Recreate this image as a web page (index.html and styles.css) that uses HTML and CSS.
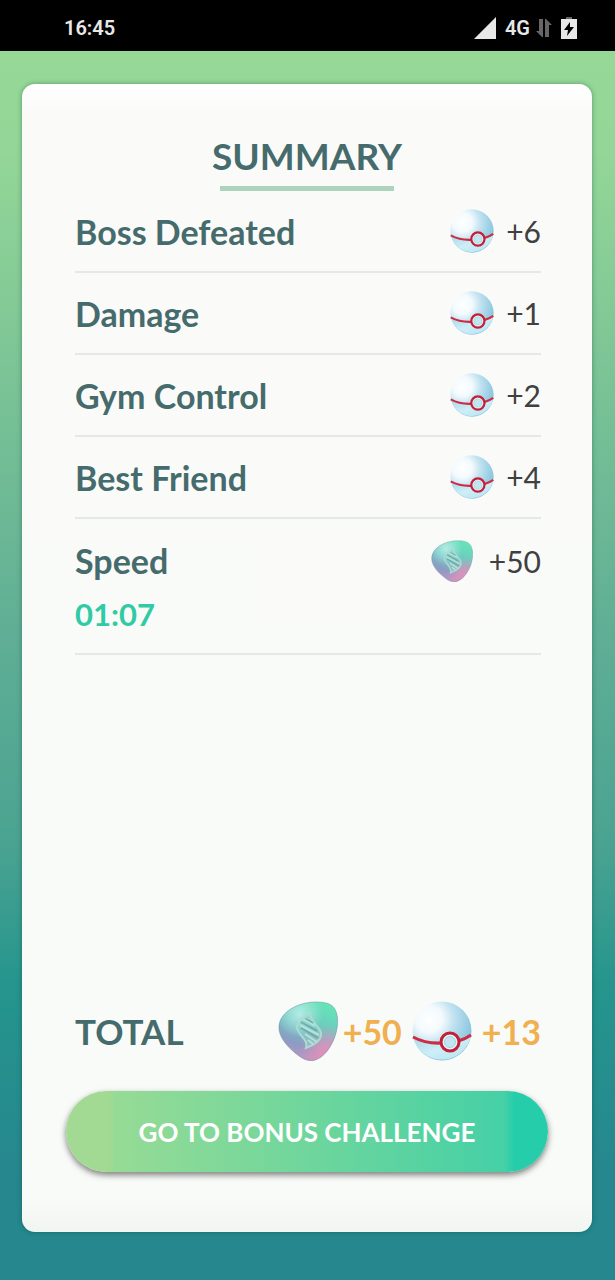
FILE: index.html
```
<!DOCTYPE html>
<html lang="en">

<head>
    <meta charset="utf-8">
    <meta name="viewport" content="width=device-width, initial-scale=1.0">
    <title>Summary</title>
    <link rel="stylesheet" href="styles.css">
</head>

<body>
    <!-- shared icons -->
    <svg class="sprite" aria-hidden="true">
        <defs>
            <radialGradient id="ball-fill" cx="0.28" cy="0.3" r="0.75">
                <stop offset="0" stop-color="#ffffff" />
                <stop offset="0.3" stop-color="#f3fafd" />
                <stop offset="0.55" stop-color="#c3e3f0" />
                <stop offset="1" stop-color="#86c5de" />
            </radialGradient>
            <linearGradient id="ball-low" x1="0" y1="0" x2="1" y2="1">
                <stop offset="0" stop-color="#a6d6e6" />
                <stop offset="0.5" stop-color="#cdeef7" />
                <stop offset="1" stop-color="#b5e2f0" />
            </linearGradient>
            <linearGradient id="candy-fill" x1="0.7" y1="0" x2="0.3" y2="1">
                <stop offset="0" stop-color="#63e5b6" />
                <stop offset="0.45" stop-color="#72c3c2" />
                <stop offset="0.75" stop-color="#8b9cc2" />
                <stop offset="1" stop-color="#bf92c6" />
            </linearGradient>
            <radialGradient id="candy-pink" cx="0.85" cy="0.95" r="0.55">
                <stop offset="0" stop-color="#f08dbb" />
                <stop offset="0.4" stop-color="#e391bb" stop-opacity="0.8" />
                <stop offset="1" stop-color="#e391bb" stop-opacity="0" />
            </radialGradient>
            <radialGradient id="candy-shine" cx="0.35" cy="0.2" r="0.4">
                <stop offset="0" stop-color="#c4f3ee" stop-opacity="0.8" />
                <stop offset="1" stop-color="#c4f3ee" stop-opacity="0" />
            </radialGradient>
        </defs>
        <symbol id="ball" viewBox="0 0 60 60">
            <circle cx="30" cy="30" r="29.5" fill="url(#ball-fill)" />
            <path d="M1 35 Q14 43 30 42 Q48 42 59 34 A29.5 29.5 0 0 1 1 35Z" fill="url(#ball-low)" />
            <path d="M1 36 Q14 43 30 42 Q48 42 59 34" fill="none" stroke="#cd2c45" stroke-width="3" />
            <circle cx="38" cy="41" r="9" fill="#e4f4f9" stroke="#c51f38" stroke-width="3" />
            <circle cx="38" cy="41" r="5.5" fill="#c2e6f0" stroke="#a3d3e2" />
        </symbol>
        <symbol id="candy" viewBox="0 0 60 60">
            <path d="M1 25 C2 11 20 1 38 1 C51 1 57 4 59 14 C62 30 53 49 43 56 C36 61 29 61 21 55 C10 47 0 36 1 25Z" fill="url(#candy-fill)" />
            <path d="M1 25 C2 11 20 1 38 1 C51 1 57 4 59 14 C62 30 53 49 43 56 C36 61 29 61 21 55 C10 47 0 36 1 25Z" fill="url(#candy-pink)" />
            <path d="M1 25 C2 11 20 1 38 1 C51 1 57 4 59 14 C62 30 53 49 43 56 C36 61 29 61 21 55 C10 47 0 36 1 25Z" fill="url(#candy-shine)" />
            <path d="M1 25 C2 11 20 1 38 1 C51 1 57 4 59 14 C62 30 53 49 43 56 C36 61 29 61 21 55 C10 47 0 36 1 25Z" fill="none" stroke="#7189a4" stroke-opacity="0.5" />
            <!-- dna mark -->
            <path d="M32 12 C26 16 20 19 19 26 C19 34 31 38 28 47 C36 44 44 39 43 32 C42 25 32 22 32 12Z" fill="#8fcfc8" fill-opacity="0.5" stroke="#a9ddd3" stroke-width="2" />
            <path d="M27 18 L35 22 M23 21 L39 30 M23 27 L40 37" stroke="#5f9fa4" stroke-opacity="0.7" stroke-width="2" />
            <path d="M25 18 L37 25 M22 24 L41 34 M27 33 L39 41 M30 39 L35 43" stroke="#b4e3d8" stroke-width="2" />
        </symbol>
    </svg>

    <header class="status-bar">
        <span class="clock">16:45</span>
        <div class="status-icons">
            <svg class="signal" viewBox="0 0 22 22"><path d="M22 0V22H0Z" fill="#e8e8e8" /></svg>
            <span class="network">4G</span>
            <svg class="arrows" viewBox="0 0 16 18"><path d="M3 0H7V18H6L0 12H3ZM9 18V0H10L16 6H13V18Z" fill="#666" /></svg>
            <svg class="battery" viewBox="0 0 16 22"><path d="M5 0H11V2H5Z" fill="#666" /><path d="M0 2H16V22H0Z" fill="#e8e8e8" /><path d="M9 5L3 13H7L6 19L13 10H9Z" fill="#000" /></svg>
        </div>
    </header>

    <main class="card">
        <h1>SUMMARY</h1>

        <ul class="rewards">
            <li>
                <span class="label">Boss Defeated</span>
                <svg class="ball"><use href="#ball" /></svg>
                <span class="amount">+6</span>
            </li>
            <li>
                <span class="label">Damage</span>
                <svg class="ball"><use href="#ball" /></svg>
                <span class="amount">+1</span>
            </li>
            <li>
                <span class="label">Gym Control</span>
                <svg class="ball"><use href="#ball" /></svg>
                <span class="amount">+2</span>
            </li>
            <li>
                <span class="label">Best Friend</span>
                <svg class="ball"><use href="#ball" /></svg>
                <span class="amount">+4</span>
            </li>
            <li class="speed">
                <span class="label">Speed</span>
                <svg class="candy"><use href="#candy" /></svg>
                <span class="amount">+50</span>
                <span class="time">01:07</span>
            </li>
        </ul>

        <section class="total">
            <h2>TOTAL</h2>
            <svg><use href="#candy" /></svg>
            <span class="sum">+50</span>
            <svg><use href="#ball" /></svg>
            <span class="sum">+13</span>
        </section>

        <button type="button" class="bonus">GO TO BONUS CHALLENGE</button>
    </main>
</body>

</html>
```
FILE: styles.css
```
:root {
    --text: #466b6c;
    --green: #30cba5;
    --orange: #f0b04f;
    --line: #e6e8e6;
}

* {
    box-sizing: border-box;
}

body {
    display: flex;
    flex-direction: column;
    min-height: 100vh;
    margin: 0;
    font-family: Lato, sans-serif;
    color: var(--text);
    background: linear-gradient(#96d896 4%, #93d697 12%, #5fae95 50%, #4aa391 66%, #25958d 77%, #26878e 92%);
}

.sprite {
    position: absolute;
    width: 0;
    height: 0;
}

/* phone status bar */
.status-bar {
    display: flex;
    justify-content: space-between;
    align-items: center;
    height: 51px;
    padding: 4px 38px 0 64px;
    background: #000;
    color: #e8e8e8;
    font-family: Roboto, sans-serif;
    font-size: 20px;
    font-weight: 600;
}

.status-icons {
    display: flex;
    align-items: center;
    gap: 6px;
}

.signal {
    width: 22px;
    height: 22px;
    margin-right: 3px;
}

.arrows {
    width: 16px;
    height: 18px;
    margin-right: 3px;
}

.battery {
    width: 16px;
    height: 22px;
}

/* card */
.card {
    flex: 1;
    display: flex;
    flex-direction: column;
    margin: 33px 23px 48px 22px;
    padding: 50px 44px 60px;
    border-radius: 13px;
    background: linear-gradient(#fff, #fafbf9 28px, #f9fbf8 97%, #f1f5f0);
    box-shadow: 0 0 5px rgba(0, 60, 50, 0.4);
}

h1 {
    align-self: center;
    margin: 0;
    font-size: 37px;
    font-weight: 700;
    line-height: 44px;
}

h1::after {
    content: "";
    display: block;
    height: 5px;
    margin: 8px 8px 0;
    background: #aed3bd;
}

.rewards {
    margin: 0 7px 0 9px;
    padding: 0;
    list-style: none;
}

.rewards li {
    display: flex;
    flex-wrap: wrap;
    align-items: center;
    height: 82px;
    border-bottom: 2px solid var(--line);
}

.label {
    flex: 1;
    font-size: 34px;
    font-weight: 700;
}

.amount {
    color: #404040;
    font-size: 30px;
}

.ball {
    width: 44px;
    height: 44px;
    margin-right: 12px;
}

.candy {
    width: 42px;
    height: 42px;
    margin-right: 16px;
}

.rewards .speed {
    height: 136px;
    padding: 14px 0;
}

.time {
    width: 100%;
    color: var(--green);
    font-size: 31px;
    font-weight: 700;
}

.total {
    display: flex;
    align-items: center;
    gap: 5px;
    margin: auto 7px 30px 9px;
}

h2 {
    flex: 1;
    margin: 0;
    font-size: 35px;
    font-weight: 700;
}

.total svg {
    width: 60px;
    height: 60px;
}

.total .sum + svg {
    margin: 0 5px;
}

.sum {
    color: var(--orange);
    font-size: 34px;
    font-weight: 700;
}

.bonus {
    height: 81px;
    border: 0;
    border-radius: 41px;
    background: linear-gradient(90deg, #a2da94 9%, #96db95 10%, #6fd69c 50%, #45d0a6 91%, #25cdab 93%);
    box-shadow: 0 3px 6px rgba(0, 0, 0, 0.5);
    color: #fff;
    font-family: inherit;
    font-size: 26px;
    font-weight: 700;
}
```
